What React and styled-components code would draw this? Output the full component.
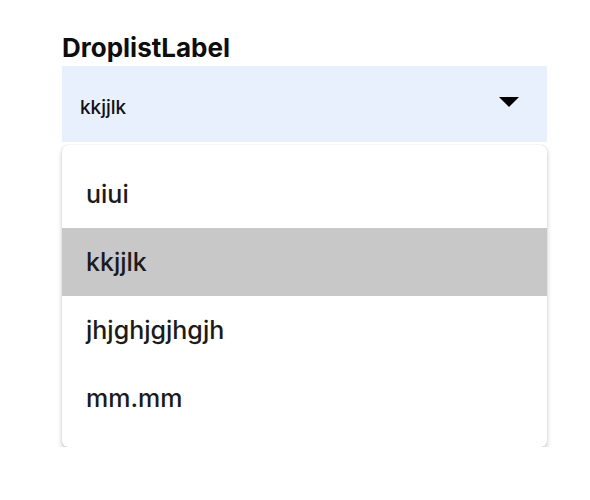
import React from "react";
import styled, { createGlobalStyle } from "styled-components";

const Global = createGlobalStyle`
  html, body { margin: 0; padding: 0; background: #ffffff; }
  body { font-family: "Inter", "Noto Sans", sans-serif; color: #1b1b1b; }
`;

const Page = styled.div`
  padding: 33px 43px 0 62px;
  width: 485px;
`;

const Label = styled.div`
  font-size: 26px;
  font-weight: 700;
  line-height: 30px;
  color: #0d0d0d;
  margin-bottom: 3px;
`;

const Select = styled.div`
  height: 76px;
  box-sizing: border-box;
  background: #e8effd;
  display: flex;
  align-items: center;
  justify-content: space-between;
  padding: 0 28px 0 18px;
`;

const Value = styled.span`
  font-size: 19px;
  font-weight: 500;
  color: #111;
  padding-top: 6px;
`;

const CaretIcon = styled.svg`
  display: block;
  margin-bottom: 4px;
`;

const Menu = styled.ul`
  list-style: none;
  margin: 3px 0 0;
  padding: 15px 0;
  background: #fff;
  border-radius: 6px;
  box-shadow: 0 3px 5px rgba(0,0,0,0.22), 0 0 1px rgba(0,0,0,0.22);
  overflow: hidden;
`;

const Item = styled.li`
  height: 68px;
  display: flex;
  align-items: center;
  padding-left: 24px;
  font-size: 25px;
  font-weight: 500;
  color: #1b1b1b;
  background: ${p => (p.$active ? "#c8c8c8" : "transparent")};
`;

const Caret = () => (
  <CaretIcon width="20" height="10" viewBox="0 0 20 10">
    <polygon points="0,0 20,0 10,10" fill="#000" />
  </CaretIcon>
);

const options = ["uiui", "kkjjlk", "jhjghjgjhgjh", "mm.mm"];

export default function App() {
  const value = "kkjjlk";
  return (
    <Page>
      <Global />
      <Label>DroplistLabel</Label>
      <Select>
        <Value>{value}</Value>
        <Caret />
      </Select>
      <Menu>
        {options.map(o => (
          <Item key={o} $active={o === value}>{o}</Item>
        ))}
      </Menu>
    </Page>
  );
}
